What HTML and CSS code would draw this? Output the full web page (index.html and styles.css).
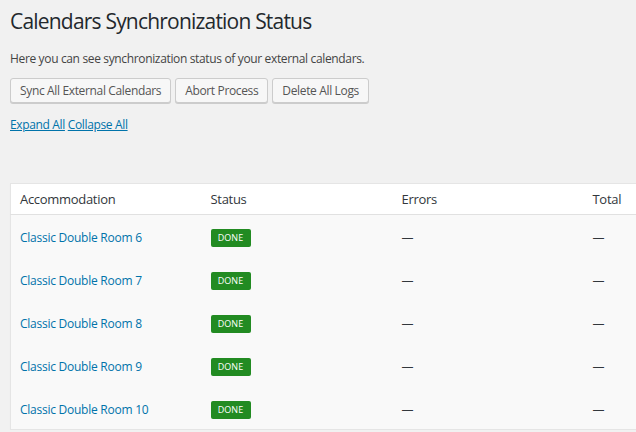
FILE: index.html
```html
<!DOCTYPE html>
<html>
<head>
<meta charset="utf-8">
<title>Calendars Synchronization Status</title>
<link rel="stylesheet" href="styles.css">
</head>
<body>
<div class="wrap">
  <h1 class="title">Calendars Synchronization Status</h1>
  <p class="intro">Here you can see synchronization status of your external calendars.</p>
  <div class="actions">
    <button class="btn">Sync All External Calendars</button>
    <button class="btn">Abort Process</button>
    <button class="btn">Delete All Logs</button>
  </div>
  <div class="toggles">
    <a href="#" class="toggle">Expand All</a> <a href="#" class="toggle">Collapse All</a>
  </div>
  <table class="sync-table">
    <thead>
      <tr>
        <th>Accommodation</th>
        <th>Status</th>
        <th>Errors</th>
        <th>Total</th>
      </tr>
    </thead>
    <tbody>
      <tr><td><a href="#" class="row-title">Classic Double Room 6</a></td><td><span class="badge">Done</span></td><td>—</td><td>—</td></tr>
      <tr><td><a href="#" class="row-title">Classic Double Room 7</a></td><td><span class="badge">Done</span></td><td>—</td><td>—</td></tr>
      <tr><td><a href="#" class="row-title">Classic Double Room 8</a></td><td><span class="badge">Done</span></td><td>—</td><td>—</td></tr>
      <tr><td><a href="#" class="row-title">Classic Double Room 9</a></td><td><span class="badge">Done</span></td><td>—</td><td>—</td></tr>
      <tr><td><a href="#" class="row-title">Classic Double Room 10</a></td><td><span class="badge">Done</span></td><td>—</td><td>—</td></tr>
    </tbody>
  </table>
</div>
</body>
</html>
```

FILE: styles.css
```css
html {
  overflow: hidden;
}
body {
  margin: 0;
  background: #f1f1f1;
  color: #444;
  font-family: "Open Sans", "Noto Sans", sans-serif;
  font-size: 12px;
}
.wrap {
  padding: 0 0 0 10px;
}
.title {
  margin: 0;
  padding: 7px 0 0;
  font-size: 21px;
  letter-spacing: -0.8px;
  line-height: 29px;
  font-weight: 400;
  color: #23282d;
}
.intro {
  margin: 13px 0 0;
  font-size: 12px;
  letter-spacing: -0.35px;
  line-height: 20px;
  color: #444;
}
.actions {
  display: flex;
  gap: 4px;
  margin-top: 9px;
}
.btn {
  height: 25px;
  padding: 0 9px;
  font-family: inherit;
  font-size: 12px;
  letter-spacing: -0.35px;
  color: #555;
  background: #f7f7f7;
  border: 1px solid #ccc;
  border-radius: 3px;
  box-shadow: 0 1px 0 #ccc;
}
.toggles {
  margin-top: 12px;
  font-size: 12px;
  letter-spacing: -0.35px;
  line-height: 20px;
}
.toggle {
  color: #0073aa;
}
.sync-table {
  margin-top: 48px;
  border-collapse: collapse;
  table-layout: fixed;
  width: 764px;
  background: #f9f9f9;
  border: 1px solid #e5e5e5;
  box-shadow: 0 1px 1px rgba(0,0,0,.04);
}
.sync-table th {
  width: 191px;
  box-sizing: border-box;
  text-align: left;
  font-weight: 400;
  font-size: 13px;
  letter-spacing: -0.3px;
  color: #32373c;
  background: #fff;
  height: 31px;
  padding: 0 9px;
  border-bottom: 1px solid #e1e1e1;
}
.sync-table td {
  height: 43px;
  box-sizing: border-box;
  padding: 3px 9px 0;
  color: #32373c;
  font-size: 12px;
  vertical-align: middle;
}
.row-title {
  color: #0073aa;
  text-decoration: none;
  font-size: 12px;
  letter-spacing: -0.25px;
}
.badge {
  display: inline-block;
  width: 40px;
  height: 18px;
  line-height: 18px;
  text-align: center;
  background: #228b22;
  color: #fff;
  font-size: 9px;
  letter-spacing: 0;
  text-transform: uppercase;
  border-radius: 2px;
  vertical-align: middle;
}
```
